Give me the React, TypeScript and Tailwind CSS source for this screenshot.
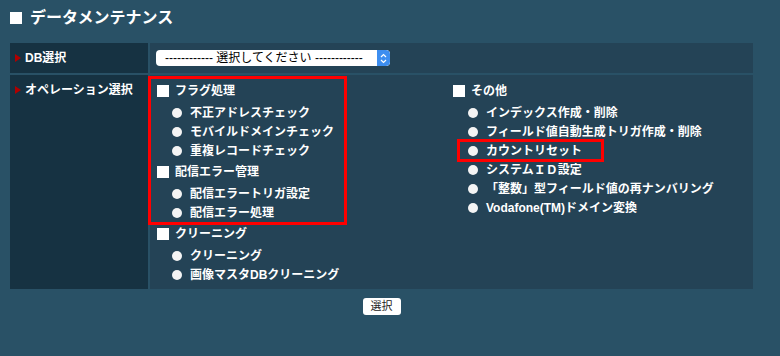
import React from "react";

const leftGroups = [
  { title: "フラグ処理", items: ["不正アドレスチェック", "モバイルドメインチェック", "重複レコードチェック"] },
  { title: "配信エラー管理", items: ["配信エラートリガ設定", "配信エラー処理"] },
];

const cleaningGroup = { title: "クリーニング", items: ["クリーニング", "画像マスタDBクリーニング"] };

const otherGroup = {
  title: "その他",
  items: [
    "インデックス作成・削除",
    "フィールド値自動生成トリガ作成・削除",
    "カウントリセット",
    "システムＩＤ設定",
    "「整数」型フィールド値の再ナンバリング",
    "Vodafone(TM)ドメイン変換",
  ],
};

const Group: React.FC<{ title: string; items: string[]; highlight?: number }> = ({ title, items, highlight }) => (
  <div>
    <div className="flex items-center h-[24px]">
      <span className="w-[12px] h-[12px] bg-white shrink-0" />
      <span className="ml-[6px]">{title}</span>
    </div>
    {items.map((item, i) => (
      <div key={i} className="relative flex items-center h-[19px] pl-[15px]">
        <span className="w-[10px] h-[10px] rounded-full bg-[#f4f4f4] shrink-0" />
        <span className="ml-[8px] whitespace-nowrap">{item}</span>
        {highlight === i && (
          <span className="absolute left-[4px] -top-[2px] -bottom-[2px] w-[147px] border-[3px] border-[#ff0000]" />
        )}
      </div>
    ))}
  </div>
);

const Label: React.FC<{ text: string }> = ({ text }) => (
  <div className="flex items-center">
    <span className="w-0 h-0 border-y-[4px] border-y-transparent border-l-[6px] border-l-[#b00000]" />
    <span className="ml-[4px]">{text}</span>
  </div>
);

export default function App() {
  return (
    <div className="w-[780px] h-[356px] bg-[#295166] text-white font-['Liberation_Sans','Noto_Sans_CJK_JP',sans-serif] font-bold text-[12px] leading-[16px] overflow-hidden">
      <div className="px-[10px] pt-[8px]">
        <h1 className="flex items-center h-[20px] text-[16px] leading-[20px] font-bold">
          <span className="w-[12px] h-[12px] bg-white" />
          <span className="ml-[8px]">データメンテナンス</span>
        </h1>

        <div className="mt-[15px] w-[743px] grid grid-cols-[138px_1fr] gap-[2px]">
          {/* DB選択 */}
          <div className="bg-[#163242] h-[30px] pl-[5px] flex items-center">
            <Label text="DB選択" />
          </div>
          <div className="bg-[#244356] h-[30px] pl-[6px] flex items-center">
            <div className="flex items-center w-[234px] h-[16px] bg-white rounded-[4px] overflow-hidden">
              <span className="flex-1 pl-[9px] text-black font-normal text-[12px] leading-[16px] whitespace-nowrap">
                ------------ 選択してください ------------
              </span>
              <span className="w-[13px] h-full bg-[#3d8ef0] flex flex-col items-center justify-center rounded-r-[4px]">
                <svg width="7" height="11" viewBox="0 0 7 11">
                  <path d="M1 4 L3.5 1.5 L6 4 M1 7 L3.5 9.5 L6 7" stroke="white" strokeWidth="1.2" fill="none" />
                </svg>
              </span>
            </div>
          </div>

          {/* オペレーション選択 */}
          <div className="bg-[#163242] h-[214px] pl-[5px] pt-[7px]">
            <Label text="オペレーション選択" />
          </div>
          <div className="bg-[#244356] h-[214px] pl-[7px] pt-[4px] grid grid-cols-[296px_1fr]">
            <div>
              <div className="relative">
                {leftGroups.map((g) => (
                  <Group key={g.title} title={g.title} items={g.items} />
                ))}
                <span className="absolute -left-[9px] -top-[3px] -bottom-[3px] w-[199px] border-[3px] border-[#ff0000]" />
              </div>
              <Group title={cleaningGroup.title} items={cleaningGroup.items} />
            </div>
            <div>
              <Group title={otherGroup.title} items={otherGroup.items} highlight={2} />
            </div>
          </div>
        </div>

        <div className="w-[743px] flex justify-center mt-[9px]">
          <button className="w-[38px] h-[17px] bg-white rounded-[3px] text-[#222] font-normal text-[11px] leading-[17px] text-center">
            選択
          </button>
        </div>
      </div>
    </div>
  );
}
